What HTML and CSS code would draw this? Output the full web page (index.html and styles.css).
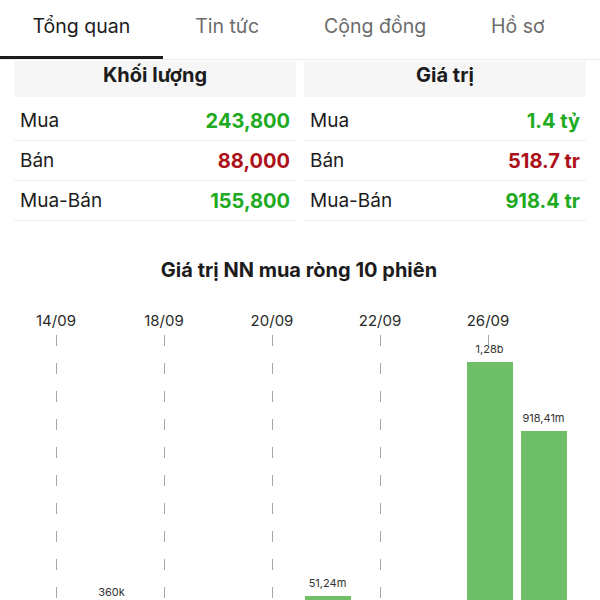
FILE: index.html
```html
<!DOCTYPE html>
<html>
<head>
	<meta charset="utf-8">
	<link rel="stylesheet" href="styles.css">
	<title>Tổng quan</title>
</head>
<body>
	<nav class="tabs">
		<a class="tab active">Tổng quan</a>
		<a class="tab">Tin tức</a>
		<a class="tab">Cộng đồng</a>
		<a class="tab">Hồ sơ</a>
	</nav>

	<div class="summary">
		<div class="panel">
			<div class="panel-head">Khối lượng</div>
			<div class="row"><span>Mua</span><b class="up">243,800</b></div>
			<div class="row"><span>Bán</span><b class="down">88,000</b></div>
			<div class="row"><span>Mua-Bán</span><b class="up">155,800</b></div>
		</div>
		<div class="panel">
			<div class="panel-head">Giá trị</div>
			<div class="row"><span>Mua</span><b class="up">1.4 tỷ</b></div>
			<div class="row"><span>Bán</span><b class="down">518.7 tr</b></div>
			<div class="row"><span>Mua-Bán</span><b class="up">918.4 tr</b></div>
		</div>
	</div>

	<div class="chart">
		<h2 class="chart-title">Giá trị NN mua ròng 10 phiên</h2>
		<div class="dates">
			<span>14/09</span><span></span>
			<span>18/09</span><span></span>
			<span>20/09</span><span></span>
			<span>22/09</span><span></span>
			<span>26/09</span><span></span>
		</div>
		<div class="plot">
			<div class="col grid"></div>
			<div class="col"><span class="val">360k</span><div class="bar" style="height: 1px"></div></div>
			<div class="col grid"></div>
			<div class="col"></div>
			<div class="col grid"></div>
			<div class="col"><span class="val">51,24m</span><div class="bar" style="height: 10px"></div></div>
			<div class="col grid"></div>
			<div class="col"></div>
			<div class="col grid"><span class="val">1,28b</span><div class="bar" style="height: 244px"></div></div>
			<div class="col"><span class="val">918,41m</span><div class="bar" style="height: 175px"></div></div>
		</div>
	</div>
</body>
</html>
```

FILE: styles.css
```css
html, body {
	margin: 0;
	background: #fff;
	color: #1c1c1c;
	font-family: Inter, "Noto Sans", sans-serif;
}

.tabs {
	display: flex;
	height: 60px;
	border-bottom: 1px solid #ececec;
	box-sizing: border-box;
}
.tab {
	display: flex;
	align-items: center;
	padding: 0 32.5px 4px;
	font-size: 19.5px;
	color: #6b6b6b;
	border-bottom: 3px solid transparent;
}
.tab.active {
	color: #1c1c1c;
	border-bottom-color: #1c1c1c;
}

.summary {
	display: flex;
	gap: 8px;
	padding: 1px 14px 0;
}
.panel {
	flex: 1;
}
.panel-head {
	height: 36px;
	margin-bottom: 4px;
	background: #f6f6f6;
	display: flex;
	align-items: center;
	justify-content: center;
	font-size: 20px;
	font-weight: 700;
	padding-bottom: 9px;
	box-sizing: border-box;
}
.row {
	display: flex;
	justify-content: space-between;
	align-items: center;
	height: 40px;
	padding: 0 6px;
	border-bottom: 1px solid #efefef;
	box-sizing: border-box;
	font-size: 19px;
}
.row b {
	font-size: 20px;
	font-weight: 700;
}
.up {
	color: #20aa22;
}
.down {
	color: #ac1119;
}

.chart {
	padding: 0 31px 0 29px;
}
.chart-title {
	margin: 38px 0 0;
	font-size: 20px;
	line-height: 22px;
	font-weight: 700;
	text-align: center;
}
.dates {
	display: grid;
	grid-template-columns: repeat(10, 54px);
	margin-top: 31px;
	font-size: 15px;
	line-height: 18px;
	color: #2a2a2a;
}
.dates span {
	text-align: center;
}
.plot {
	display: grid;
	grid-template-columns: repeat(10, 54px);
	height: 271px;
	margin-top: 5px;
}
.col {
	display: flex;
	flex-direction: column;
	justify-content: flex-end;
	align-items: center;
}
.col.grid {
	background: repeating-linear-gradient(to bottom, #a8a8a8 0 11px, transparent 11px 28px) center top / 1px 100% no-repeat;
}
.val {
	font-size: 11px;
	color: #333;
	margin: 0 0 6px 3px;
}
.bar {
	width: 46px;
	margin-left: 3px;
	background: #6fbe68;
}
```
